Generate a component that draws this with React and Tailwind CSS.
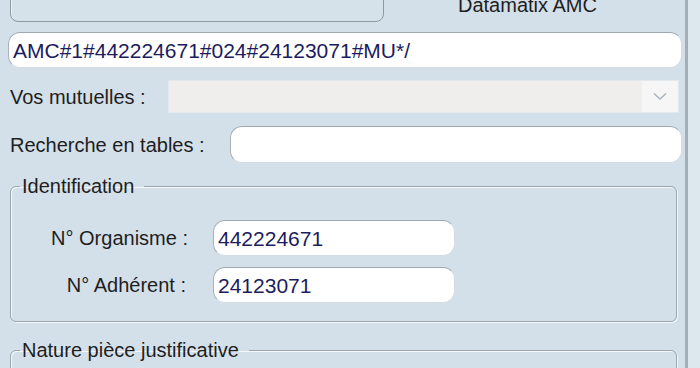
import React from 'react';

const font = { fontFamily: '"Liberation Sans", Arial, sans-serif' };

function TextBox({ value, className }) {
  return (
    <div
      className={`flex items-center bg-white rounded-[12px] border border-[#d5dde3] border-t-[#9ea8b0] border-l-[#a9b2b9] ${className}`}
    >
      <span className="pl-[4px] text-[21px] leading-none text-[#1c1c5e] whitespace-nowrap">{value}</span>
    </div>
  );
}

function GroupBox({ title, className, children }) {
  return (
    <fieldset
      className={`rounded-[6px] border border-[#9aa5ad] shadow-[inset_1px_1px_0_#f4f8fb,1px_1px_0_#f4f8fb] ${className}`}
    >
      <legend className="ml-[9px] pl-[2px] pr-[10px] text-[20px] leading-[22px] text-[#1e1e1e]">{title}</legend>
      {children}
    </fieldset>
  );
}

export default function App() {
  return (
    <div className="w-[700px] h-[368px] overflow-hidden flex bg-[#d4e0e9]" style={font}>
      <div className="w-[688px] shrink-0 border-r-[3px] border-[#a4aeb6] pl-[8px]">
        {/* top strip: button + caption */}
        <div className="h-[22px] flex">
          <div className="ml-[2px] w-[374px] h-[40px] -mt-[18px] rounded-[8px] border border-[#8d98a0] shadow-[inset_1px_1px_0_#eef3f7] bg-[#d6e2ea]" />
          <span className="ml-[74px] -mt-[5px] text-[20px] leading-[20px] text-[#1e1e1e] whitespace-nowrap">
            Datamatix AMC
          </span>
        </div>

        <TextBox value="AMC#1#442224671#024#24123071#MU*/" className="mt-[10px] w-[674px] h-[36px]" />

        {/* Vos mutuelles */}
        <div className="mt-[12px] flex items-center h-[33px]">
          <span className="w-[160px] pl-[2px] text-[20px] text-[#1e1e1e]">Vos mutuelles :</span>
          <div className="flex-1 mr-[6px] h-full flex border border-[#e3e8ec] bg-[#f2f1f0]">
            <div className="flex-1 bg-[#f0eeec]" />
            <div className="w-[36px] flex items-center justify-center bg-[#f6f6f6]">
              <svg width="14" height="9" viewBox="0 0 14 9">
                <path d="M1 1.5 L7 7 L13 1.5" fill="none" stroke="#a9b2ba" strokeWidth="1.4" />
              </svg>
            </div>
          </div>
        </div>

        {/* Recherche en tables */}
        <div className="mt-[13px] flex items-center h-[37px]">
          <span className="w-[222px] pl-[2px] text-[20px] text-[#1e1e1e]">Recherche en tables :</span>
          <TextBox value="" className="w-[452px] h-full" />
        </div>

        <GroupBox title="Identification" className="mt-[12px] ml-[2px] w-[667px] h-[147px]">
          <div className="mt-[23px] flex items-center h-[36px]">
            <span className="w-[177px] text-right text-[20px] text-[#1e1e1e]">N° Organisme :</span>
            <TextBox value="442224671" className="ml-[25px] w-[242px] h-full" />
          </div>
          <div className="mt-[11px] flex items-center h-[36px]">
            <span className="w-[175px] text-right text-[20px] text-[#1e1e1e]">N° Adhérent :</span>
            <TextBox value="24123071" className="ml-[27px] w-[242px] h-full" />
          </div>
        </GroupBox>

        <GroupBox title="Nature pièce justificative" className="mt-[17px] ml-[2px] w-[667px] h-[80px]" />
      </div>
      <div className="flex-1 bg-[#dde7ee]" />
    </div>
  );
}
